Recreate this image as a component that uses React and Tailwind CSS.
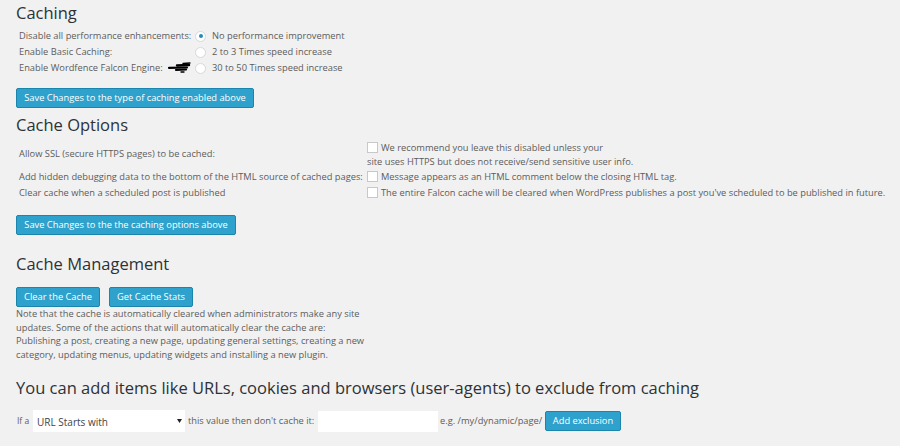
const Heading = ({ children, className = '' }) => (
  <h2 className={`text-[16.5px] leading-[26px] text-[#2d3236] whitespace-nowrap ${className}`}>{children}</h2>
);

const SaveButton = ({ children, className = '' }) => (
  <button className={`h-[20px] bg-[#2ea2cc] border border-[#1a85ad] rounded-[2px] text-white text-[9.3px] leading-none whitespace-nowrap text-center ${className}`}>
    {children}
  </button>
);

const Radio = ({ checked }) => (
  <span className="shrink-0 w-[11px] h-[11px] rounded-full bg-white border border-[#d8d8d8] flex items-center justify-center">
    {checked && <span className="w-[4px] h-[4px] rounded-full bg-[#1e8cbe]" />}
  </span>
);

const Box = () => <span className="shrink-0 block w-[11px] h-[11px] bg-white border border-[#c8c8c8]" />;

const Falcon = () => (
  <svg width="23" height="12" viewBox="0 0 23 12" className="block" stroke="#000" strokeLinecap="round">
    <path d="M15 1.5 L22 1" strokeWidth="1.3" />
    <path d="M9 3.5 L21 3" strokeWidth="2.4" />
    <path d="M1 5.8 L19 5.5" strokeWidth="2.2" />
    <path d="M8 8 L18 7.5" strokeWidth="2.2" />
    <path d="M13 10 L16 10" strokeWidth="1.4" />
  </svg>
);

const caching = [
  { label: 'Disable all performance enhancements:', text: 'No performance improvement', checked: true },
  { label: 'Enable Basic Caching:', text: '2 to 3 Times speed increase' },
  { label: 'Enable Wordfence Falcon Engine:', text: '30 to 50 Times speed increase', falcon: true },
];

export default function App() {
  return (
    <div className="w-[900px] h-[446px] overflow-hidden bg-[#f1f1f1] text-[#5c5c5c] text-[9.3px] pl-[16px]" style={{ fontFamily: '"Open Sans", sans-serif' }}>
      <Heading>Caching</Heading>

      <div className="mt-[2px] pl-[3px]">
        {caching.map((row) => (
          <div key={row.label} className="flex items-center h-[16px] leading-none whitespace-nowrap">
            <div className="w-[176px] flex items-center justify-between pr-[4px]">
              <span>{row.label}</span>
              {row.falcon && <Falcon />}
            </div>
            <Radio checked={row.checked} />
            <span className="ml-[6px]">{row.text}</span>
          </div>
        ))}
      </div>

      <SaveButton className="mt-[12px] block w-[238px]">Save Changes to the type of caching enabled above</SaveButton>

      <Heading className="mt-[4px]">Cache Options</Heading>

      <div className="mt-[3px] pl-[3px] leading-none whitespace-nowrap">
        <div className="flex">
          <div className="w-[348px] pt-[8px]">Allow SSL (secure HTTPS pages) to be cached:</div>
          <div>
            <div className="flex items-center h-[13px]">
              <Box />
              <span className="ml-[3px]">We recommend you leave this disabled unless your</span>
            </div>
            <div className="h-[14.5px] flex items-center">site uses HTTPS but does not receive/send sensitive user info.</div>
          </div>
        </div>
        <div className="flex items-center h-[16px]">
          <div className="w-[348px]">Add hidden debugging data to the bottom of the HTML source of cached pages:</div>
          <Box />
          <span className="ml-[3px]">Message appears as an HTML comment below the closing HTML tag.</span>
        </div>
        <div className="flex items-center h-[16px]">
          <div className="w-[348px]">Clear cache when a scheduled post is published</div>
          <Box />
          <span className="ml-[3px]">The entire Falcon cache will be cleared when WordPress publishes a post you've scheduled to be published in future.</span>
        </div>
      </div>

      <SaveButton className="mt-[14.5px] block w-[220px]">Save Changes to the the caching options above</SaveButton>

      <Heading className="mt-[16px]">Cache Management</Heading>

      <div className="mt-[10px] flex gap-[9px]">
        <SaveButton className="w-[84px]">Clear the Cache</SaveButton>
        <SaveButton className="w-[84px]">Get Cache Stats</SaveButton>
      </div>

      <p className="w-[355px] leading-[13.5px]">
        Note that the cache is automatically cleared when administrators make any site updates. Some of the actions that will automatically clear the cache are: Publishing a post, creating a new page, updating general settings, creating a new category, updating menus, updating widgets and installing a new plugin.
      </p>

      <Heading className="mt-[14px]">You can add items like URLs, cookies and browsers (user-agents) to exclude from caching</Heading>

      <div className="mt-[9px] flex items-center h-[22px]">
        <span className="w-[17px] pl-[1px] text-[8.5px]">If a</span>
        <div className="w-[152px] h-[22px] bg-white flex items-center justify-between pl-[4px] pr-[3px] text-[10px] text-[#444]">
          <span className="pt-[3px]">URL Starts with</span>
          <svg width="5" height="4" viewBox="0 0 5 4" className="block"><path d="M0 0 H5 L2.5 4 Z" fill="#222" /></svg>
        </div>
        <span className="ml-[3px] w-[130px] whitespace-nowrap">this value then don't cache it:</span>
        <div className="w-[120px] h-[21px] bg-white" />
        <span className="ml-[2px] w-[105px] whitespace-nowrap">e.g. /my/dynamic/page/</span>
        <SaveButton className="w-[76px]">Add exclusion</SaveButton>
      </div>
    </div>
  );
}
